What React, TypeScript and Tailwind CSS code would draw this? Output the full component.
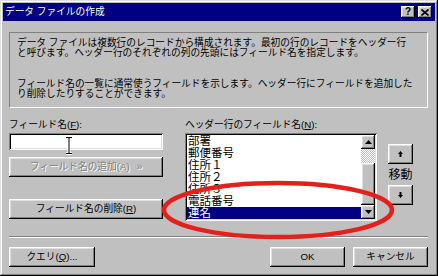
const raised =
  "bg-[#c0c0c0] shadow-[inset_-1px_-1px_#000,inset_1px_1px_#fff,inset_-2px_-2px_#808080,inset_2px_2px_#dfdfdf]";
const sunken =
  "shadow-[inset_1px_1px_#808080,inset_-1px_-1px_#fff,inset_2px_2px_#000,inset_-2px_-2px_#dfdfdf]";

const fields = ["部署", "郵便番号", "住所１", "住所２", "住所３", "電話番号", "連名"];

function Button({ children, className = "" }: { children: React.ReactNode; className?: string }) {
  return (
    <div className={`${raised} h-[20px] flex items-center justify-center text-[9.7px] leading-none ${className}`}>
      {children}
    </div>
  );
}

function Arrow({ up }: { up?: boolean }) {
  return (
    <svg width="7" height="4" viewBox="0 0 7 4" className={up ? "" : "rotate-180"}>
      <path d="M3.5 0L7 4H0Z" fill="#000" />
    </svg>
  );
}

function MoveArrow({ up }: { up?: boolean }) {
  return (
    <svg width="5" height="6" viewBox="0 0 5 6" className={up ? "" : "rotate-180"}>
      <path d="M2.5 0L5 3H0Z" fill="#000" />
      <rect x="1.5" y="3" width="2" height="3" fill="#000" />
    </svg>
  );
}

export default function App() {
  return (
    <div className="relative w-[438px] h-[276px] overflow-hidden bg-[#c0c0c0] p-[3px] flex flex-col text-black font-['Liberation_Sans','Noto_Sans_CJK_JP',sans-serif] shadow-[inset_-1px_-1px_#000,inset_1px_1px_#dfdfdf,inset_-2px_-2px_#808080,inset_2px_2px_#fff]">
      {/* title bar */}
      <div className="h-[18px] bg-[#000080] flex items-center pl-[2px] pr-[3px]">
        <span className="text-white text-[9.7px] leading-none">データ ファイルの作成</span>
        <div className="ml-auto flex gap-[3px]">
          <div className={`${raised} w-[14px] h-[12px] flex items-center justify-center text-[10px] font-bold leading-none`}>
            ?
          </div>
          <div className={`${raised} w-[14px] h-[12px] flex items-center justify-center`}>
            <svg width="8" height="7" viewBox="0 0 8 7">
              <path d="M0.5 0.5L7.5 6.5M7.5 0.5L0.5 6.5" stroke="#000" strokeWidth="1.6" />
            </svg>
          </div>
        </div>
      </div>

      <div className="flex flex-col pl-[6px] pr-[7px]">
        {/* description */}
        <div className="mt-[11px] h-[76px] border border-t-[#808080] border-l-[#808080] border-r-white border-b-white pl-[7px] pt-[5px] text-[9.7px] leading-[9.5px] whitespace-nowrap">
          <p>
            データ ファイルは複数行のレコードから構成されます。最初の行のレコードをヘッダー行
            <br />
            と呼びます。ヘッダー行のそれぞれの列の先頭にはフィールド名を指定します。
          </p>
          <p className="mt-[22px]">
            フィールド名の一覧に通常使うフィールドを示します。ヘッダー行にフィールドを追加した
            <br />
            り削除したりすることができます。
          </p>
        </div>

        {/* fields */}
        <div className="flex mt-[11px]">
          <div className="w-[154px] flex flex-col">
            <div className="h-[12px] text-[9.7px] leading-[12px]">
              フィールド名(<u>F</u>):
            </div>
            <div className={`${sunken} relative mt-[2px] h-[17px] bg-white`}>
              <svg width="8" height="19" viewBox="0 0 8 19" className="absolute left-[56px] top-[3px]">
                <path d="M1 1.5H7M4 1.5V17.5M1 17.5H7" stroke="#fff" strokeWidth="3" />
                <path d="M1 1.5H7M4 1.5V17.5M1 17.5H7" stroke="#000" strokeWidth="1" />
              </svg>
            </div>
            <Button className="mt-[7px] text-[#808080] [text-shadow:1px_1px_#fff]">
              フィールド名の追加(A)<span className="ml-[7px] text-[10px]">»</span>
            </Button>
            <Button className="mt-[22px]">
              フィールド名の削除(<u>R</u>)
            </Button>
          </div>

          <div className="ml-[22px] flex flex-col">
            <div className="h-[12px] text-[9.7px] leading-[12px]">
              ヘッダー行のフィールド名(<u>N</u>):
            </div>
            <div className="flex">
              <div className={`${sunken} mt-[2px] w-[192px] h-[88px] bg-white p-[2px] flex`}>
                <div className="flex-1 flex flex-col overflow-hidden">
                  {fields.map((f, i) => (
                    <div
                      key={f}
                      className={`h-[12px] text-[11.5px] leading-[12px] pl-[1px] ${
                        i === fields.length - 1 ? "bg-[#000080] text-white" : ""
                      }`}
                    >
                      {f}
                    </div>
                  ))}
                </div>
                <div className="w-[14px] flex flex-col">
                  <div className={`${raised} h-[14px] flex items-center justify-center`}>
                    <Arrow up />
                  </div>
                  <div className="h-[14px] bg-[repeating-conic-gradient(#c0c0c0_0_25%,#fff_0_50%)] bg-[length:2px_2px]" />
                  <div className={`${raised} flex-1`} />
                  <div className={`${raised} h-[14px] flex items-center justify-center`}>
                    <Arrow />
                  </div>
                </div>
              </div>

              <div className="ml-[11px] w-[25px] flex flex-col">
                <div className={`${raised} mt-[13px] h-[20px] flex items-center justify-center`}>
                  <MoveArrow up />
                </div>
                <div className="h-[21px] flex items-center justify-center text-[12px] leading-none">
                  移動
                </div>
                <div className={`${raised} h-[20px] flex items-center justify-center`}>
                  <MoveArrow />
                </div>
              </div>
            </div>
          </div>
        </div>

        {/* separator */}
        <div className="mt-[15px] h-[2px] border-t border-t-[#808080] border-b border-b-white" />

        {/* bottom buttons */}
        <div className="mt-[9px] flex gap-[8px]">
          <Button className="w-[86px]">
            クエリ(<u>Q</u>)...
          </Button>
          <Button className="ml-auto w-[75px]">OK</Button>
          <Button className="w-[75px]">キャンセル</Button>
        </div>
      </div>

      {/* red annotation */}
      <svg width="438" height="276" className="absolute inset-0 pointer-events-none">
        <ellipse cx="278" cy="210" rx="114" ry="27" fill="none" stroke="#e3201b" strokeWidth="4.5" />
      </svg>
    </div>
  );
}
